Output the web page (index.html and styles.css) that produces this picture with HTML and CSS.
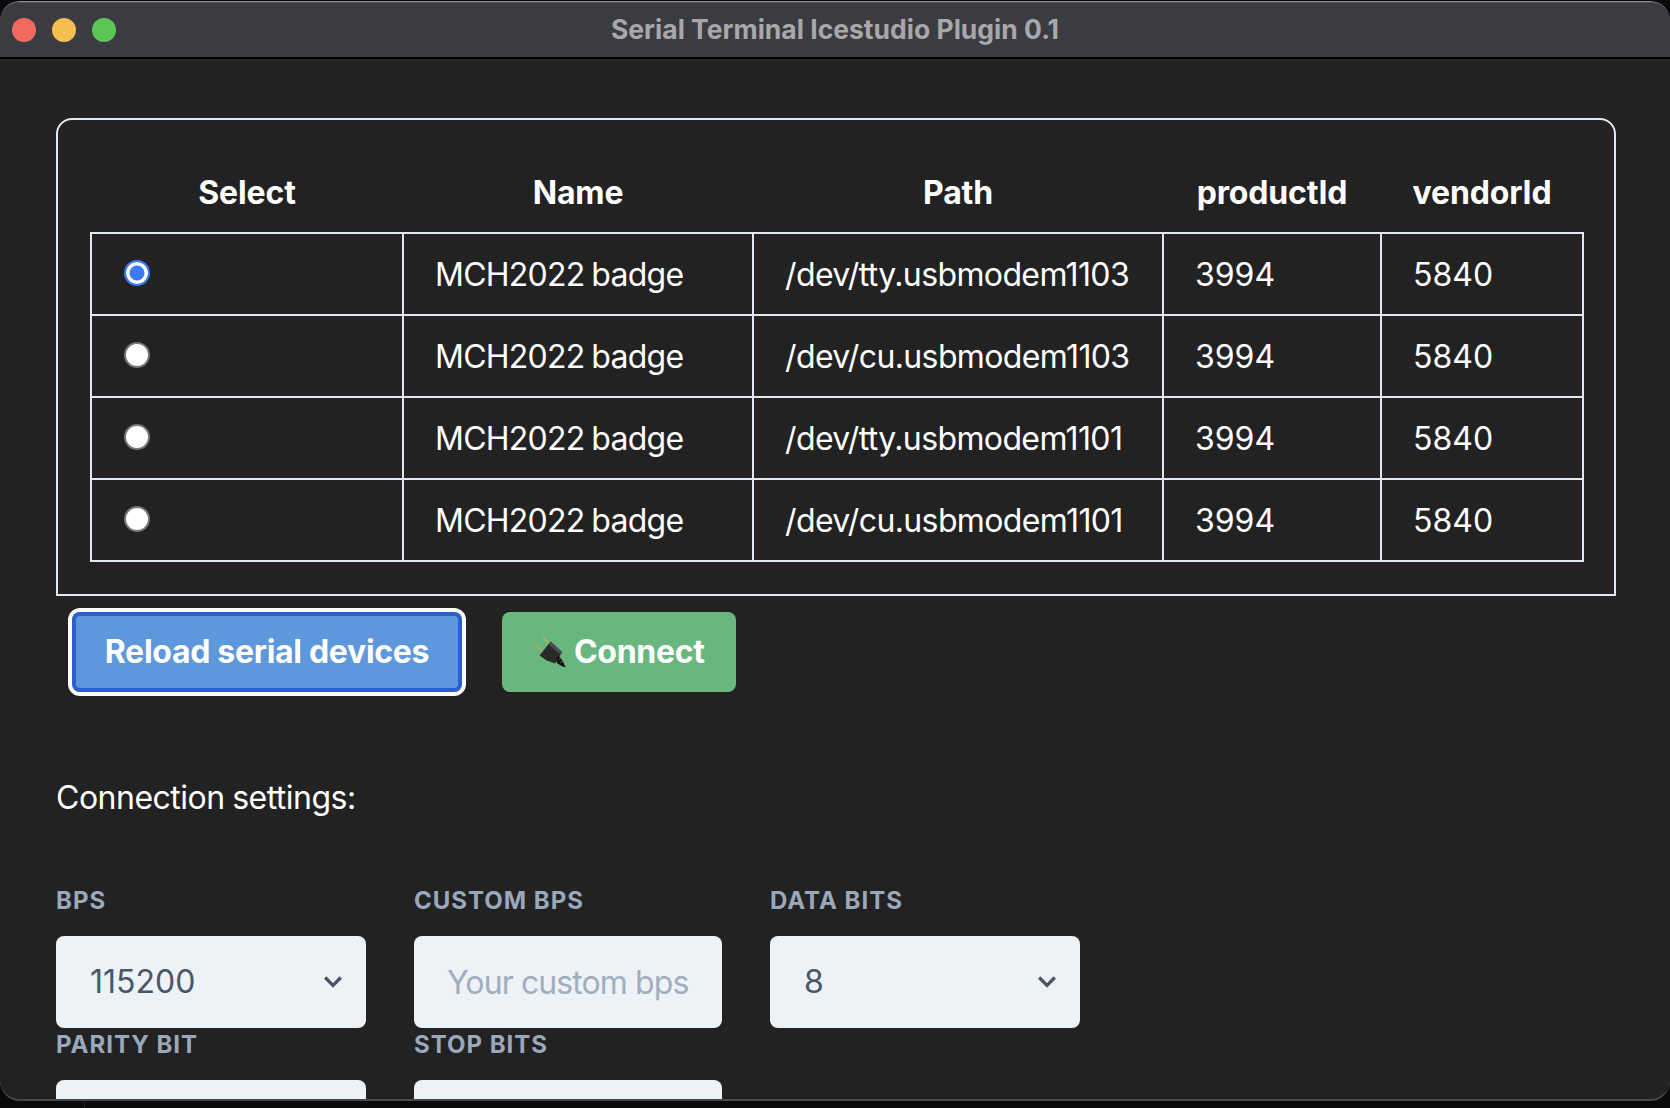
FILE: index.html
```html
<!DOCTYPE html>
<html lang="en">
<head>
<meta charset="utf-8">
<title>Serial Terminal Icestudio Plugin 0.1</title>
<link rel="stylesheet" href="styles.css">
</head>
<body>
<div class="window">
  <header class="titlebar">
    <div class="lights">
      <span class="light light-red"></span>
      <span class="light light-yellow"></span>
      <span class="light light-green"></span>
    </div>
    <div class="title">Serial Terminal Icestudio Plugin 0.1</div>
  </header>
  <main class="content">
    <section class="panel">
      <table class="devices">
        <colgroup>
          <col class="col-select"><col class="col-name"><col class="col-path"><col class="col-product"><col class="col-vendor">
        </colgroup>
        <thead>
          <tr><th>Select</th><th>Name</th><th>Path</th><th>productId</th><th>vendorId</th></tr>
        </thead>
        <tbody>
          <tr><td><input class="radio" type="radio" name="dev" checked></td><td class="name">MCH2022 badge</td><td>/dev/tty.usbmodem1103</td><td class="num">3994</td><td class="num">5840</td></tr>
          <tr><td><input class="radio" type="radio" name="dev"></td><td class="name">MCH2022 badge</td><td>/dev/cu.usbmodem1103</td><td class="num">3994</td><td class="num">5840</td></tr>
          <tr><td><input class="radio" type="radio" name="dev"></td><td class="name">MCH2022 badge</td><td>/dev/tty.usbmodem1101</td><td class="num">3994</td><td class="num">5840</td></tr>
          <tr><td><input class="radio" type="radio" name="dev"></td><td class="name">MCH2022 badge</td><td>/dev/cu.usbmodem1101</td><td class="num">3994</td><td class="num">5840</td></tr>
        </tbody>
      </table>
    </section>
    <div class="actions">
      <button class="btn btn-reload" type="button">Reload serial devices</button>
      <button class="btn btn-connect" type="button">
        <svg class="plug" viewBox="95 45 110 105" aria-hidden="true">
          <path d="M127 49 L152 76" stroke="#d9a63c" stroke-width="4" fill="none"/>
          <path d="M105 71 L130 98" stroke="#d9a63c" stroke-width="4" fill="none"/>
          <path d="M152 64 L188 97 L176 113 L166 131 L140 122 L118 107 Z" fill="#29292b"/>
          <path d="M152 64 L188 97 L182 105 L146 72 Z" fill="#4e4e52"/>
          <path d="M168 114 L178 108 L188 122 L198 143 L184 138 L172 130 Z" fill="#111"/>
          <path d="M176 119 L185 113 M181 128 L191 122" stroke="#77777a" stroke-width="2.5" fill="none"/>
        </svg>
        <span>Connect</span>
      </button>
    </div>
    <p class="settings-title">Connection settings:</p>
    <form class="settings">
      <div class="field">
        <label class="field-label">BPS</label>
        <div class="select-wrap">
          <select class="control"><option>115200</option></select>
          <svg class="chevron" viewBox="0 0 20 20" aria-hidden="true"><path d="M4.8 7 L10 12.2 L15.2 7" fill="none" stroke="#4a5568" stroke-width="2.2"/></svg>
        </div>
      </div>
      <div class="field">
        <label class="field-label">Custom BPS</label>
        <input class="control control-text" type="text" placeholder="Your custom bps">
      </div>
      <div class="field">
        <label class="field-label">Data bits</label>
        <div class="select-wrap">
          <select class="control"><option>8</option></select>
          <svg class="chevron" viewBox="0 0 20 20" aria-hidden="true"><path d="M4.8 7 L10 12.2 L15.2 7" fill="none" stroke="#4a5568" stroke-width="2.2"/></svg>
        </div>
      </div>
      <div class="field">
        <label class="field-label">Parity bit</label>
        <div class="select-wrap">
          <select class="control"><option>none</option></select>
        </div>
      </div>
      <div class="field">
        <label class="field-label">Stop bits</label>
        <div class="select-wrap">
          <select class="control"><option>1</option></select>
        </div>
      </div>
    </form>
  </main>
</div>
<span class="desk-line"></span>
</body>
</html>
```
FILE: styles.css
```css
* { box-sizing: border-box; }
html, body { margin: 0; height: 100%; }
body {
  position: relative;
  background: #0a0a0a;
  padding-top: 2px;
  height: 1108px;
  overflow: hidden;
  font-family: Inter, "Liberation Sans", sans-serif;
  color: #fff;
}
.desk-line {
  position: absolute;
  left: 84px;
  top: 1102px;
  width: 1px;
  height: 6px;
  background: #222;
}
.window {
  height: 1099px;
  background: #222222;
  border-radius: 20px;
  overflow: hidden;
  display: flex;
  flex-direction: column;
  border-bottom: 2px solid #4a4a4a;
  box-shadow: 0 -1px 0 #8a8a8a;
}
.titlebar {
  flex: none;
  height: 57px;
  padding-bottom: 3px;
  background: #3b3c41;
  border-top: 1px solid #55565a;
  border-bottom: 2px solid #050505;
  display: flex;
  align-items: center;
  justify-content: center;
  position: relative;
}
.lights {
  position: absolute;
  left: 12px;
  top: 15px;
  display: flex;
  gap: 16px;
}
.light { width: 24px; height: 24px; border-radius: 50%; }
.light-red { background: #f16a5f; }
.light-yellow { background: #f6bd4f; }
.light-green { background: #5dc755; }
.title {
  font-size: 26.5px;
  font-weight: 700;
  color: #a8a8aa;
  white-space: nowrap;
}
.content {
  flex: 1;
  min-height: 0;
  padding: 59px 54px 0 56px;
}
.panel {
  border: 2px solid #e2e8f0;
  border-radius: 16px 16px 0 0;
  padding: 32px 30px 32px 32px;
}
.devices {
  width: 100%;
  table-layout: fixed;
  border-collapse: collapse;
  font-size: 32px;
  line-height: 48px;
}
.col-select { width: 312px; }
.col-name { width: 350px; }
.col-path { width: 410px; }
.col-product { width: 218px; }
.devices th {
  height: 81px;
  padding: 1px 0 0;
  font-weight: 700;
  letter-spacing: -0.15px;
  text-align: center;
}
.devices td {
  height: 82px;
  padding: 2px 31px 0;
  border: 2px solid #e2e8f0;
  font-weight: 400;
  letter-spacing: -0.62px;
  white-space: nowrap;
  vertical-align: middle;
}
.devices td.name { letter-spacing: -0.75px; word-spacing: -1.5px; }
.devices td.num { letter-spacing: 0; }
.radio {
  appearance: none;
  display: block;
  width: 26px;
  height: 26px;
  margin: -4px 0 0 1px;
  border-radius: 50%;
  background: #fff;
  border: 2px solid #767676;
}
.radio:checked {
  background: #3b7af5;
  border: 2px solid #3b7af5;
  box-shadow: inset 0 0 0 3.5px #fff;
}
.actions {
  display: flex;
  align-items: center;
  margin-top: 16px;
  padding-left: 16px;
  gap: 40px;
}
.btn {
  display: flex;
  align-items: center;
  height: 80px;
  padding: 0 32px;
  border: 0;
  border-radius: 8px;
  font: 700 32px/48px Inter, "Liberation Sans", sans-serif;
  letter-spacing: -0.3px;
  white-space: nowrap;
  color: #fff;
}
.btn-reload {
  width: 390px;
  justify-content: center;
  background: #5d98dc;
  box-shadow: inset 0 0 0 4px #2b5fc9, 0 0 0 4px #fff;
}
.btn-connect {
  width: 234px;
  background: #68b77e;
  gap: 6px;
}
.plug {
  flex: none;
  width: 36px;
  height: 35px;
  margin-left: -2px;
}
.settings-title {
  margin: 82px 0 0;
  font-size: 32px;
  line-height: 48px;
  letter-spacing: -0.5px;
  word-spacing: -1px;
}
.settings {
  margin-top: 62px;
  display: grid;
  grid-template-columns: 310px 308px 310px;
  column-gap: 48px;
}
.field-label {
  display: block;
  height: 52px;
  font-size: 24px;
  line-height: 34px;
  font-weight: 700;
  letter-spacing: 1px;
  text-transform: uppercase;
  color: #9ba8bb;
}
.select-wrap { position: relative; }
.control {
  display: block;
  width: 100%;
  height: 92px;
  margin: 0;
  padding: 0 8px 0 34px;
  border: 0;
  border-radius: 8px;
  outline: 0;
  appearance: none;
  background: #edf2f7;
  color: #4a5568;
  font: 400 32px/48px Inter, "Liberation Sans", sans-serif;
}
.control-text {
  padding-left: 33px;
  letter-spacing: -0.9px;
}
.control::placeholder { color: #a0aec0; opacity: 1; }
.chevron {
  position: absolute;
  right: 18px;
  top: 31px;
  width: 30px;
  height: 30px;
}
```
